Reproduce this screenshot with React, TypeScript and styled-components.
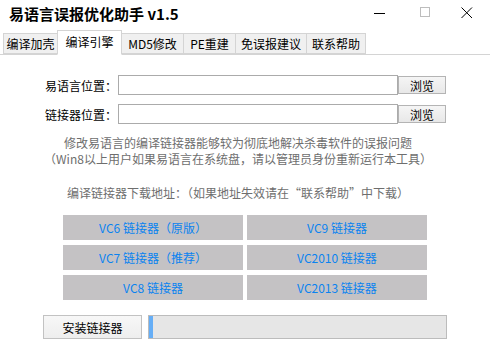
import React from 'react';
import styled, {createGlobalStyle} from 'styled-components';

const GlobalStyle = createGlobalStyle`
  html, body {
    margin: 0;
    padding: 0;
    background: #ffffff;
  }
  body {
    font-family: 'Noto Sans CJK SC', 'Liberation Sans', sans-serif;
    font-size: 12px;
    color: #000000;
  }
`;

const Window = styled.div`
  width: 492px;
  height: 350px;
  background: #ffffff;
  display: flex;
  flex-direction: column;
  overflow: hidden;
`;

const TitleBar = styled.div`
  height: 29px;
  display: flex;
  align-items: center;
  padding-left: 9px;
`;

const Title = styled.div`
  flex: 1;
  font-size: 15px;
  font-weight: bold;
  line-height: 18px;
  margin-top: -2px;
`;

const Controls = styled.div`
  display: flex;
  align-items: center;
  margin-right: 19px;
  margin-top: -4px;
`;

const ControlButton = styled.div<{$gap: number}>`
  width: 12px;
  height: 20px;
  margin-left: ${p => p.$gap}px;
  display: flex;
  align-items: center;
  justify-content: center;
`;

const TabStrip = styled.div`
  height: 25px;
  display: flex;
  align-items: flex-end;
  padding-left: 3px;
  margin-right: 2px;
  border-bottom: 1px solid #d4d4d4;
`;

const Tab = styled.div<{$active?: boolean; $first?: boolean; $width: number}>`
  width: ${p => p.$width}px;
  height: ${p => (p.$active ? 25 : 21)}px;
  margin-bottom: ${p => (p.$active ? -1 : 0)}px;
  padding-bottom: ${p => (p.$active ? 2 : 0)}px;
  box-sizing: border-box;
  display: flex;
  align-items: center;
  justify-content: center;
  font-size: 12px;
  line-height: 14px;
  color: #000;
  background: ${p => (p.$active ? '#ffffff' : '#f0f0f0')};
  border: 1px solid #d4d4d4;
  border-bottom-color: ${p => (p.$active ? '#ffffff' : '#d4d4d4')};
  border-left-width: ${p => (p.$first || p.$active ? 1 : 0)}px;
  ${p => (p.$active ? 'margin-left: -1px; position: relative; z-index: 1;' : '')}
`;

const Body = styled.div`
  display: flex;
  flex-direction: column;
  padding-top: 20px;
`;

const FieldRow = styled.div`
  display: flex;
  align-items: center;
  height: 20px;
  margin-bottom: 9px;
`;

const FieldLabel = styled.div`
  width: 117px;
  text-align: right;
  font-size: 12px;
  color: #000;
  padding-right: 1px;
`;

const PathInput = styled.div`
  width: 280px;
  height: 20px;
  box-sizing: border-box;
  border: 1px solid #ababab;
  background: #fff;
`;

const BrowseButton = styled.div`
  width: 48px;
  height: 18px;
  box-sizing: border-box;
  border: 1px solid #b4b4b4;
  background: linear-gradient(#f5f5f5, #e8e8e8);
  display: flex;
  align-items: center;
  justify-content: center;
  font-size: 12px;
  color: #000;
`;

const Notice = styled.div<{$gap: number}>`
  width: 476px;
  text-align: center;
  color: #6e6e6e;
  font-size: 12px;
  line-height: 16px;
  margin-top: ${p => p.$gap}px;
`;

const LinkerGrid = styled.div`
  display: grid;
  grid-template-columns: 180px 180px;
  grid-auto-rows: 25px;
  column-gap: 4px;
  row-gap: 5px;
  margin: 14px 0 0 63px;
`;

const LinkerButton = styled.div`
  background: #c4c2c4;
  color: #0a82f0;
  font-size: 12px;
  display: flex;
  align-items: center;
  justify-content: center;
  white-space: pre;
`;

const Footer = styled.div`
  display: flex;
  align-items: center;
  margin: 15px 0 0 43px;
  gap: 6px;
`;

const InstallButton = styled.div`
  width: 99px;
  height: 24px;
  box-sizing: border-box;
  border: 1px solid #c2c2c2;
  background: linear-gradient(#f7f7f7, #eeeeee);
  display: flex;
  align-items: center;
  justify-content: center;
  font-size: 12px;
  color: #000;
`;

const Progress = styled.div`
  width: 299px;
  height: 24px;
  box-sizing: border-box;
  border: 1px solid #bcbcbc;
  background: #e6e6e6;
  display: flex;
`;

const ProgressFill = styled.div`
  background: #66aef6;
`;

const linkers = [
  'VC6 链接器（原版）',
  'VC9 链接器',
  'VC7 链接器（推荐）',
  'VC2010 链接器',
  'VC8 链接器',
  'VC2013 链接器',
];

const tabs = [
  {label: '编译加壳', width: 55},
  {label: '编译引擎', width: 65},
  {label: 'MD5修改', width: 62},
  {label: 'PE重建', width: 52},
  {label: '免误报建议', width: 71},
  {label: '联系帮助', width: 59},
];

export default function App() {
  return (
    <Window>
      <GlobalStyle />
      <TitleBar>
        <Title>易语言误报优化助手 v1.5</Title>
        <Controls>
          <ControlButton $gap={0}>
            <svg width="12" height="12" viewBox="0 0 12 12">
              <line x1="0" y1="6.5" x2="11" y2="6.5" stroke="#000" strokeWidth="1" />
            </svg>
          </ControlButton>
          <ControlButton $gap={33}>
            <svg width="11" height="11" viewBox="0 0 11 11">
              <rect x="0.5" y="0.5" width="9" height="9" fill="none" stroke="#bdbdbd" strokeWidth="1" />
            </svg>
          </ControlButton>
          <ControlButton $gap={30}>
            <svg width="12" height="12" viewBox="0 0 12 12">
              <path d="M0.5 0.5 L11 11 M11 0.5 L0.5 11" stroke="#000" strokeWidth="1" />
            </svg>
          </ControlButton>
        </Controls>
      </TitleBar>
      <TabStrip>
        {tabs.map((t, i) => (
          <Tab key={t.label} $active={i === 1} $first={i === 0} $width={t.width}>
            {t.label}
          </Tab>
        ))}
      </TabStrip>
      <Body>
        <FieldRow>
          <FieldLabel>易语言位置：</FieldLabel>
          <PathInput />
          <BrowseButton>浏览</BrowseButton>
        </FieldRow>
        <FieldRow>
          <FieldLabel>链接器位置：</FieldLabel>
          <PathInput />
          <BrowseButton>浏览</BrowseButton>
        </FieldRow>
        <Notice $gap={2}>
          修改易语言的编译链接器能够较为彻底地解决杀毒软件的误报问题
          <br />
          （Win8以上用户如果易语言在系统盘，请以管理员身份重新运行本工具）
        </Notice>
        <Notice $gap={18}>编译链接器下载地址：（如果地址失效请在“联系帮助”中下载）</Notice>
        <LinkerGrid>
          {linkers.map(l => (
            <LinkerButton key={l}>{l}</LinkerButton>
          ))}
        </LinkerGrid>
        <Footer>
          <InstallButton>安装链接器</InstallButton>
          <Progress>
            <ProgressFill style={{width: 4}} />
          </Progress>
        </Footer>
      </Body>
    </Window>
  );
}
